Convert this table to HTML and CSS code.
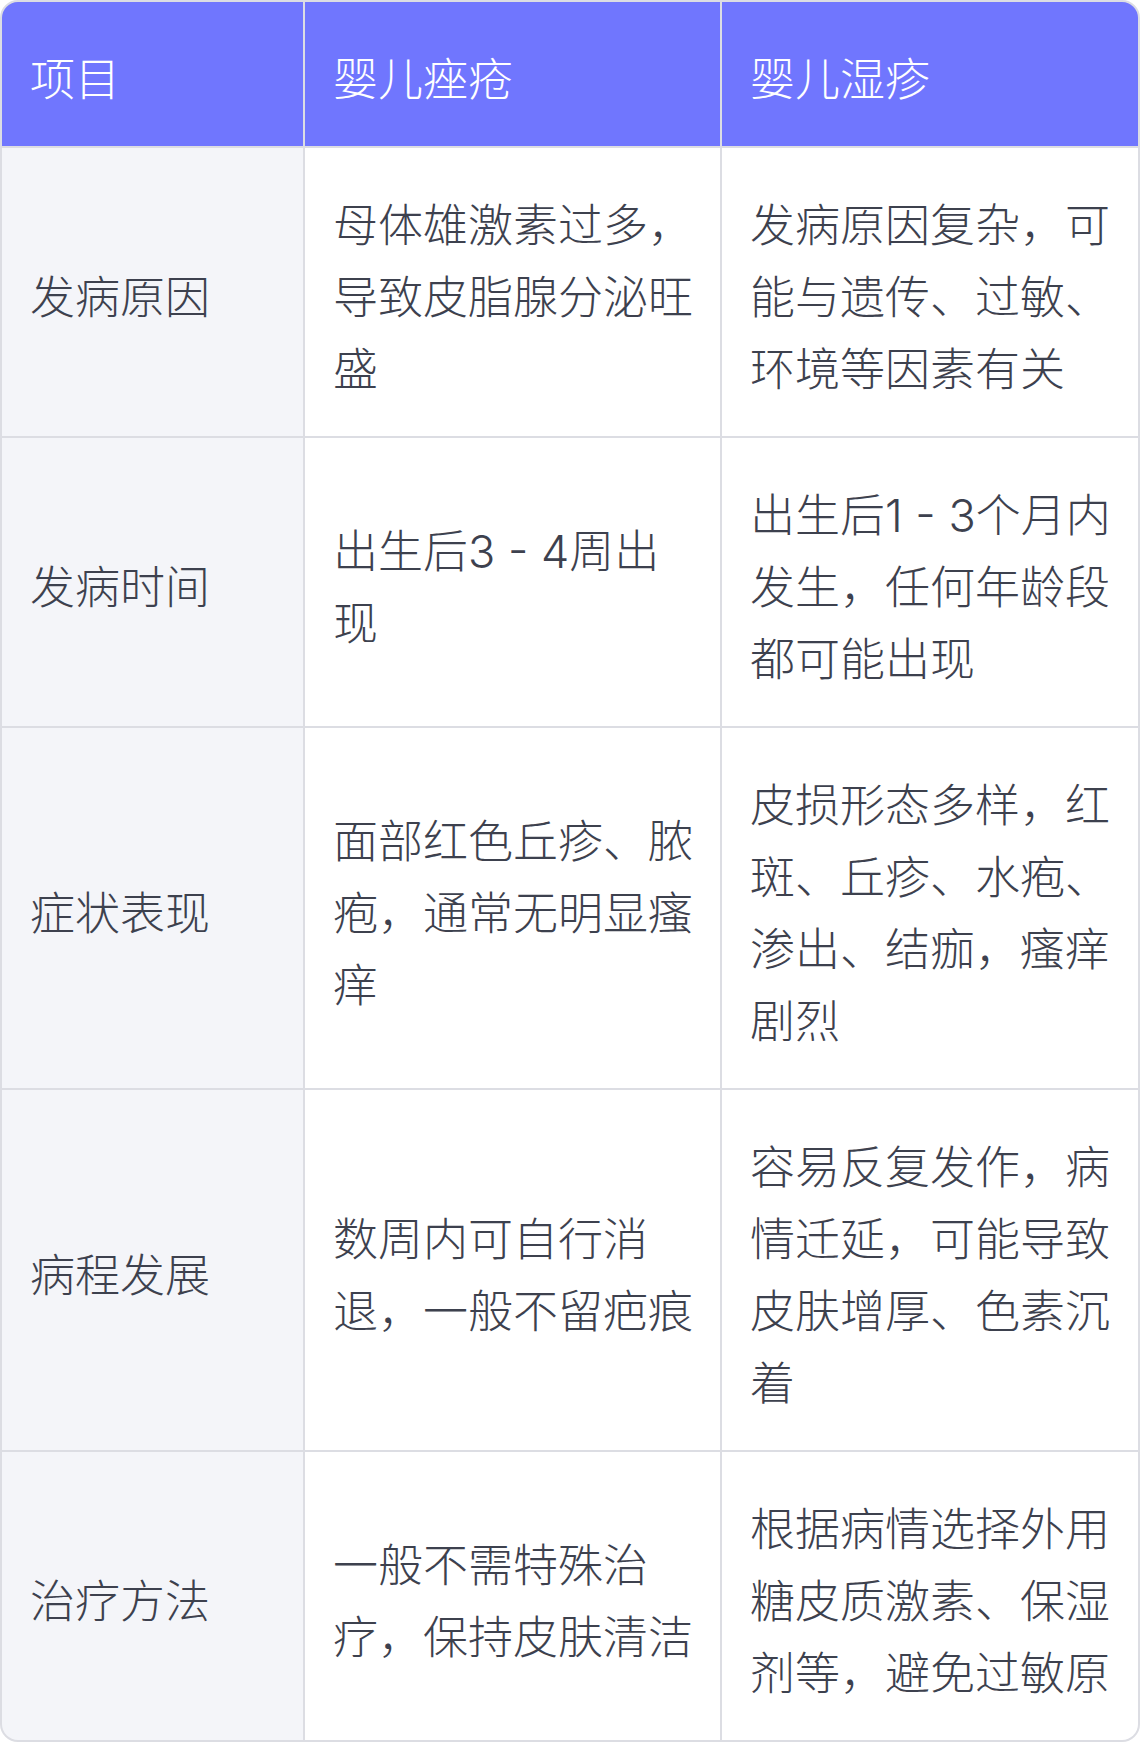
FILE: index.html
```html
<!DOCTYPE html>
<html lang="zh-CN">
<head>
<meta charset="utf-8">
<title>婴儿痤疮与婴儿湿疹对比</title>
<link rel="stylesheet" href="styles.css">
</head>
<body>
<div class="compare" role="table">
  <div class="cell head" role="columnheader">项目</div>
  <div class="cell head" role="columnheader">婴儿痤疮</div>
  <div class="cell head" role="columnheader">婴儿湿疹</div>

  <div class="cell label" role="rowheader">发病原因</div>
  <div class="cell" role="cell">母体雄激素过多，导致皮脂腺分泌旺盛</div>
  <div class="cell" role="cell">发病原因复杂，可能与遗传、过敏、环境等因素有关</div>

  <div class="cell label" role="rowheader">发病时间</div>
  <div class="cell" role="cell">出生后3 - 4周出现</div>
  <div class="cell" role="cell">出生后1 - 3个月内发生，任何年龄段都可能出现</div>

  <div class="cell label" role="rowheader">症状表现</div>
  <div class="cell" role="cell">面部红色丘疹、脓疱，通常无明显瘙痒</div>
  <div class="cell" role="cell">皮损形态多样，红斑、丘疹、水疱、渗出、结痂，瘙痒剧烈</div>

  <div class="cell label" role="rowheader">病程发展</div>
  <div class="cell" role="cell">数周内可自行消退，一般不留疤痕</div>
  <div class="cell" role="cell">容易反复发作，病情迁延，可能导致皮肤增厚、色素沉着</div>

  <div class="cell label" role="rowheader">治疗方法</div>
  <div class="cell" role="cell">一般不需特殊治疗，保持皮肤清洁</div>
  <div class="cell" role="cell">根据病情选择外用糖皮质激素、保湿剂等，避免过敏原</div>
</div>
</body>
</html>
```

FILE: styles.css
```css
html, body {
  margin: 0;
  padding: 0;
  background: #ffffff;
}

body {
  font-family: "Inter", "Noto Sans CJK SC", sans-serif;
  font-weight: 300;
  color: #3d414e;
}

.compare {
  box-sizing: border-box;
  width: 1140px;
  display: grid;
  grid-template-columns: 301px 415px 1fr;
  gap: 2px;
  background: #dcdde3;
  border: 2px solid #dcdde3;
  border-radius: 18px;
  overflow: hidden;
}

.cell {
  display: flex;
  align-items: center;
  padding: 42px 26px 30px 28px;
  font-size: 45px;
  line-height: 72px;
  background: #ffffff;
  word-break: break-all;
}

.head {
  background: #7076fe;
  color: #ffffff;
}

.label {
  background: #f4f5f9;
}
```
